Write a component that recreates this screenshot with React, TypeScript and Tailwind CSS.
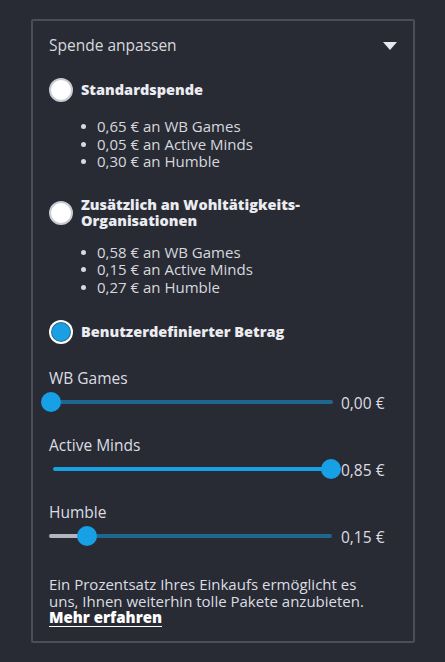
import React from "react";

const OPTIONS_A = ["0,65 € an WB Games", "0,05 € an Active Minds", "0,30 € an Humble"];
const OPTIONS_B = ["0,58 € an WB Games", "0,15 € an Active Minds", "0,27 € an Humble"];

function Radio({ checked }: { checked?: boolean }) {
  if (checked) {
    return (
      <span className="w-6 h-6 shrink-0 rounded-full bg-white flex items-center justify-center">
        <span className="w-[18px] h-[18px] rounded-full bg-[#1a9fe3] ring-1 ring-[#2a6f95]" />
      </span>
    );
  }
  return <span className="w-6 h-6 shrink-0 rounded-full bg-white border-2 border-[#c9cbd2]" />;
}

function BulletList({ items }: { items: string[] }) {
  return (
    <ul className="ml-[32px] text-[15px] leading-[17.5px] text-[#d7d8de]">
      {items.map(t => (
        <li key={t} className="flex items-center">
          <span className="w-[5px] h-[5px] rounded-full bg-[#d7d8de] mr-[11px]" />
          {t}
        </li>
      ))}
    </ul>
  );
}

type SliderProps = { label: string; value: string; pos: number; mode: "dark" | "full" | "split" };

function Slider({ label, value, pos, mode }: SliderProps) {
  // pos is the thumb centre in px from the track's left edge
  return (
    <div>
      <div className="text-[15.5px] leading-5 text-[#dcdde2]">{label}</div>
      <div className="flex items-center h-5 mt-1">
        <div className="relative w-[284px] h-5">
          {mode === "dark" && (
            <div className="absolute left-[2px] right-0 top-[8px] h-1 rounded-full bg-[#1e6890]" />
          )}
          {mode === "full" && (
            <div className="absolute left-[4px] right-[2px] top-[8px] h-1 rounded-full bg-[#1aa0e4]" />
          )}
          {mode === "split" && (
            <>
              <div className="absolute left-0 top-[8px] h-1 rounded-full bg-[#b4b6bf]" style={{ width: pos }} />
              <div className="absolute right-[1px] top-[8px] h-1 rounded-full bg-[#1e6890]" style={{ left: pos }} />
            </>
          )}
          <div
            className="absolute top-0 w-5 h-5 rounded-full bg-[#17a0e6]"
            style={{ left: pos - 10 }}
          />
        </div>
        <span className="ml-[8px] text-[15.5px] leading-5 mt-[2px] text-[#dcdde2]">{value}</span>
      </div>
    </div>
  );
}

export default function App() {
  return (
    <div className="min-h-screen bg-[#282b34] pt-[19px] pl-[31px] font-['Open_Sans','Liberation_Sans',sans-serif]">
      <div className="w-[384px] h-[624px] border-2 border-[#4b4e5a] rounded-[2px] px-4 pt-[15px]">
        {/* header */}
        <div className="flex items-center justify-between h-5">
          <span className="text-[15.5px] text-[#d7d8de]">Spende anpassen</span>
          <svg width="14" height="8" viewBox="0 0 14 8">
            <path d="M0 0 H14 L7 8 Z" fill="#e8e8ee" />
          </svg>
        </div>

        <label className="flex items-center gap-2 mt-[22px]">
          <Radio />
          <span className="text-[14.5px] leading-5 font-extrabold text-[#ebebf0]">Standardspende</span>
        </label>
        <div className="mt-4">
          <BulletList items={OPTIONS_A} />
        </div>

        <label className="flex items-center gap-2 mt-[26px]">
          <Radio />
          <span className="text-[14.5px] leading-[16px] font-extrabold text-[#ebebf0]">
            Zusätzlich an Wohltätigkeits-
            <br />
            Organisationen
          </span>
        </label>
        <div className="mt-[15px]">
          <BulletList items={OPTIONS_B} />
        </div>

        <label className="flex items-center gap-2 mt-6">
          <Radio checked />
          <span className="text-[14.5px] leading-5 font-extrabold text-[#ebebf0]">Benutzerdefinierter Betrag</span>
        </label>

        <div className="mt-6 flex flex-col gap-[23px]">
          <Slider label="WB Games" value="0,00 €" pos={2} mode="dark" />
          <Slider label="Active Minds" value="0,85 €" pos={282} mode="full" />
          <Slider label="Humble" value="0,15 €" pos={38} mode="split" />
        </div>

        <p className="mt-[30px] text-[15px] leading-[16.5px] text-[#dcdde2]">
          Ein Prozentsatz Ihres Einkaufs ermöglicht es
          <br />
          uns, Ihnen weiterhin tolle Pakete anzubieten.
          <br />
          <a href="#" className="font-extrabold text-white underline underline-offset-[3px]">Mehr erfahren</a>
        </p>
      </div>
    </div>
  );
}
